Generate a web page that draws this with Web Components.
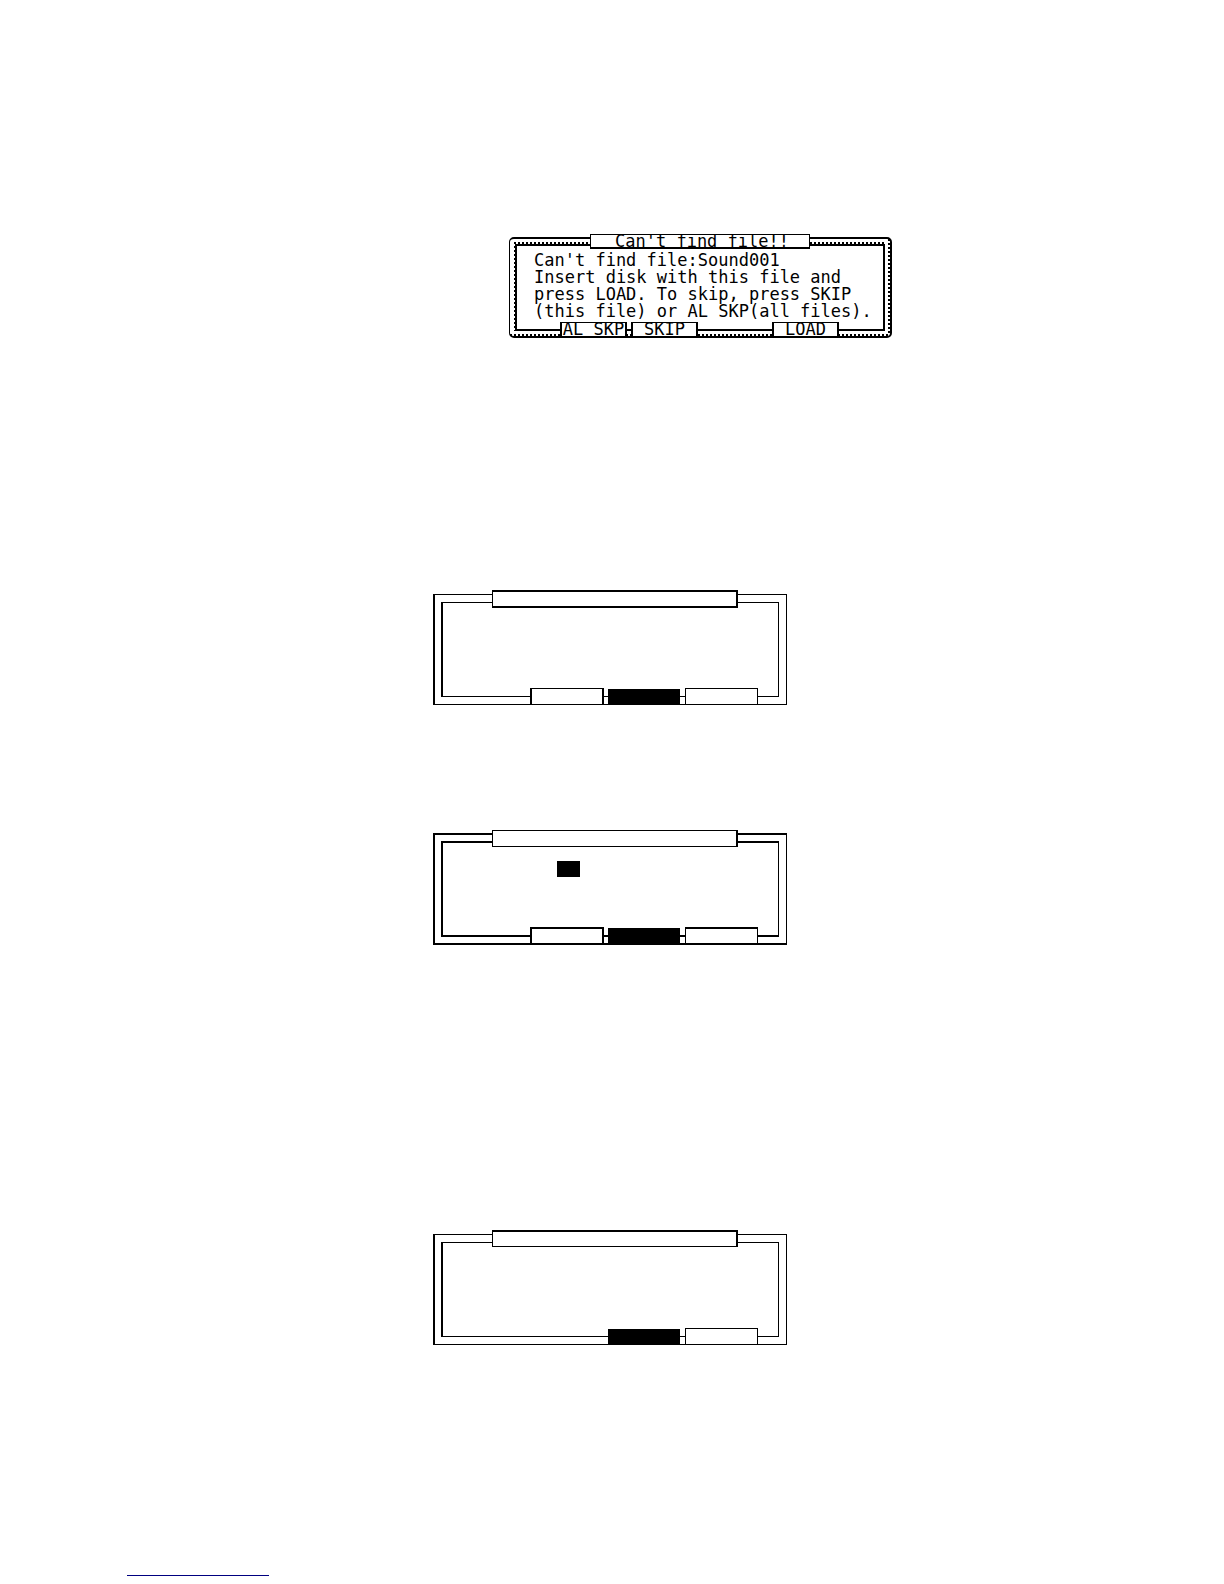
<!DOCTYPE html>
<html lang="en">
<head>
<meta charset="utf-8">
<meta name="viewport" content="width=device-width, initial-scale=1">
<title>Can't find file</title>
<style>
  body {
    margin: 0;
    background: #fff;
    color: #000;
    font-family: 'DejaVu Sans Mono', 'Liberation Mono', monospace;
  }

  main {
    display: grid;
    justify-items: center;
    padding: 234px 131px 8px 127px;
  }

  lcd-window {
    margin-left: 181px;
    margin-bottom: 252px;
  }

  .first {
    --title-border: 2px 2px 2px 1px;
    --title-height: 18px;
    margin-bottom: 125px;
  }

  .second {
    --line: 2px;
    --title-border: 1px 2px 1px 1px;
    margin-bottom: 285px;
  }

  .third {
    --title-border: 2px 2px 1px 1px;
    margin-bottom: 230px;
  }

  .field {
    width: 23px;
    height: 16px;
    margin: 18px 0 0 114px;
    background: #000;
  }

  page-link {
    justify-self: start;
  }
</style>
</head>
<body>
<main>
  <lcd-window>
    <span slot="title">Can't find file!!</span>
    <div>Can't find file:Sound001</div>
    <div>Insert disk with this file and</div>
    <div>press LOAD. To skip, press SKIP</div>
    <div>(this file) or AL SKP(all files).</div>
    <lcd-key slot="left">AL SKP</lcd-key>
    <lcd-key slot="left">SKIP</lcd-key>
    <lcd-key slot="right">LOAD</lcd-key>
  </lcd-window>

  <blank-window class="first">
    <blank-key slot="keys" wide></blank-key>
    <blank-key slot="keys" filled></blank-key>
    <blank-key slot="keys"></blank-key>
  </blank-window>

  <blank-window class="second">
    <div class="field"></div>
    <blank-key slot="keys" wide></blank-key>
    <blank-key slot="keys" filled></blank-key>
    <blank-key slot="keys"></blank-key>
  </blank-window>

  <blank-window class="third">
    <blank-key slot="keys" filled></blank-key>
    <blank-key slot="keys"></blank-key>
  </blank-window>

  <page-link></page-link>
</main>

<script>
function defineElement(name, html) {
  const template = document.createElement('template');
  template.innerHTML = html;

  window.customElements.define(name, class extends HTMLElement {
    constructor() {
      super();
      this.attachShadow({ mode: 'open' });
      this.shadowRoot.appendChild(template.content.cloneNode(true));
    }
  });
}

// Window with the ticked double frame. The frame, title and keys share one grid cell
defineElement('lcd-window', `
  <style>
    :host {
      display: grid;
      width: 383px;
      font-size: 17px;
      line-height: 17px;
      white-space: nowrap;
    }

    .frame, .title, .keys {
      grid-area: 1 / 1;
      box-sizing: border-box;
    }

    .frame {
      display: grid;
      margin-top: 3px;
      padding: 3px 5px 5px 4px;
      border: solid #000;
      border-width: 2px 2px 2px 1px;
      border-radius: 5px;
      background:
        repeating-linear-gradient(to right, #000 0 2px, #fff 2px 4px) bottom / 100% 2px no-repeat,
        repeating-linear-gradient(to bottom, #000 0 2px, #fff 2px 4px) right / 2px 100% no-repeat;
    }

    .ring {
      display: grid;
      padding: 2px 0 0 1px;
      background:
        repeating-linear-gradient(to right, #000 0 2px, #fff 2px 4px) top / 100% 2px no-repeat,
        repeating-linear-gradient(to bottom, #000 0 2px, #fff 2px 4px) left / 1px 100% no-repeat;
    }

    .screen {
      padding: 6px 0 9px 17px;
      border: 2px solid #000;
      background: #fff;
    }

    .title {
      align-self: start;
      height: 15px;
      margin: 0 82px 0 81px;
      padding-left: 24px;
      border: 1px solid #000;
      border-bottom-width: 2px;
      background: #fff;
      line-height: 13px;
      overflow: hidden;
    }

    .keys {
      align-self: end;
      display: flex;
      justify-content: space-between;
      padding: 0 53px 0 51px;
    }

    .group {
      display: flex;
      gap: 4px;
    }
  </style>
  <div class="frame"><div class="ring"><div class="screen"><slot></slot></div></div></div>
  <div class="title"><slot name="title"></slot></div>
  <div class="keys">
    <div class="group"><slot name="left"></slot></div>
    <div class="group"><slot name="right"></slot></div>
  </div>
`);

defineElement('lcd-key', `
  <style>
    :host {
      display: block;
    }

    button {
      display: block;
      box-sizing: border-box;
      width: 67px;
      height: 16px;
      padding: 0;
      border: 2px solid #000;
      border-top-width: 1px;
      border-radius: 0;
      background: #fff;
      color: #000;
      font: 17px/13px 'DejaVu Sans Mono', 'Liberation Mono', monospace;
      overflow: hidden;
    }
  </style>
  <button type="button"><slot></slot></button>
`);

// Plain double frame, --line sets the horizontal strokes
defineElement('blank-window', `
  <style>
    :host {
      display: grid;
      width: 354px;
      height: 115px;
    }

    .frame, .title, .keys {
      grid-area: 1 / 1;
      box-sizing: border-box;
    }

    .frame {
      display: grid;
      margin-top: calc(5px - var(--line, 1px));
      padding: calc(8px - var(--line, 1px)) 7px calc(8px - var(--line, 1px)) 6px;
    }

    .frame, .inner {
      border: solid #000;
      border-width: var(--line, 1px) 1px var(--line, 1px) 2px;
    }

    .title {
      align-self: start;
      height: var(--title-height, 17px);
      margin: 0 49px 0 59px;
      border: solid #000;
      border-width: var(--title-border);
      background: #fff;
    }

    .keys {
      align-self: end;
      display: flex;
      justify-content: flex-end;
      align-items: flex-end;
      gap: 4px;
      padding-right: 29px;
    }
  </style>
  <div class="frame"><div class="inner"><slot></slot></div></div>
  <div class="title"></div>
  <div class="keys"><slot name="keys"></slot></div>
`);

defineElement('blank-key', `
  <style>
    :host {
      display: block;
    }

    :host([filled]) {
      padding-right: 1px;
    }

    button {
      display: block;
      box-sizing: border-box;
      width: 73px;
      height: calc(16px + var(--line, 1px));
      padding: 0;
      border: solid #000;
      border-width: var(--line, 1px) 1px;
      border-radius: 0;
      background: #fff;
    }

    :host([wide]) button {
      width: 74px;
      border-left-width: 2px;
      border-right-width: 2px;
    }

    :host([filled]) button {
      width: 72px;
      height: calc(15px + var(--line, 1px));
      background: #000;
    }
  </style>
  <button type="button"></button>
`);

defineElement('page-link', `
  <style>
    :host {
      display: block;
      width: 142px;
    }

    a {
      display: block;
      border-bottom: 1px solid #000080;
    }
  </style>
  <a href="#"></a>
`);
</script>
</body>
</html>
